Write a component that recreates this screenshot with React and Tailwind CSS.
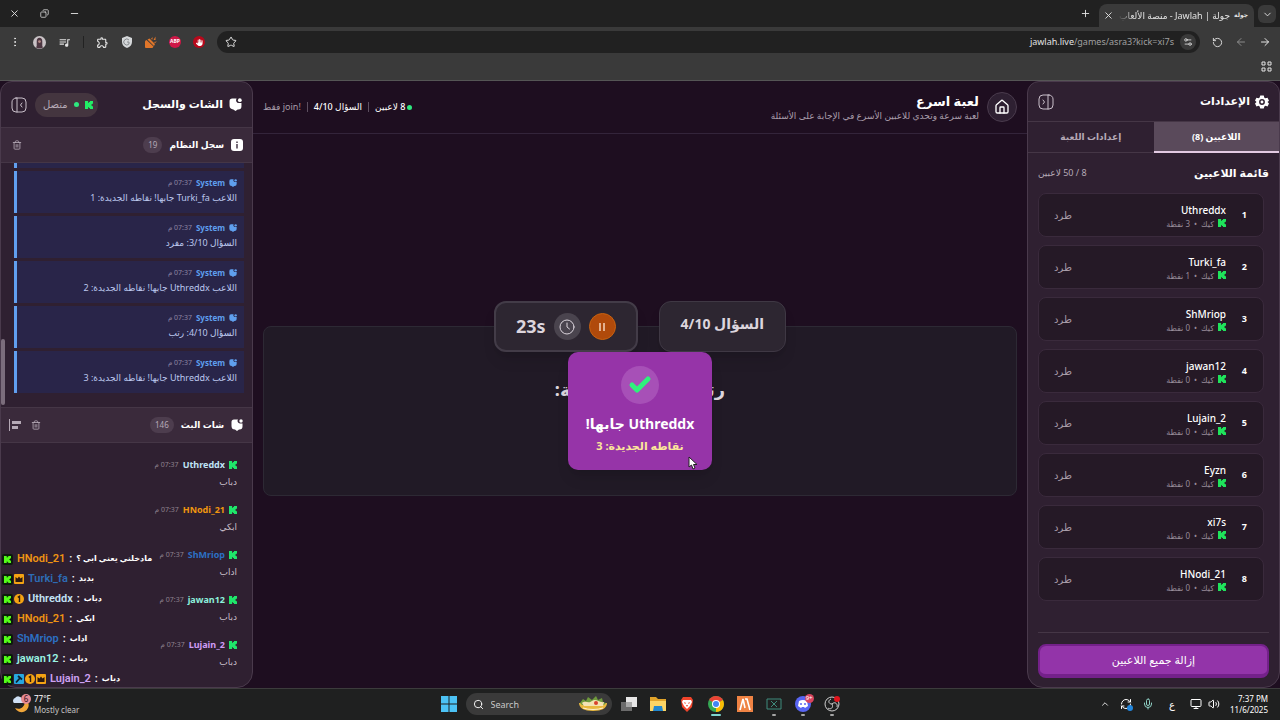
import {
  ArrowLeft,
  ArrowRight,
  Check,
  ChevronDown,
  ChevronUp,
  Copy,
  House,
  Mic,
  Minus,
  Monitor,
  MoreVertical,
  Plus,
  RefreshCw,
  RotateCcw,
  Search,
  Settings2,
  Star,
  Trash2,
  Volume2,
  X,
} from "lucide-react";
import { MdOutlineExtension, MdQueueMusic } from "react-icons/md";
import { FaHand } from "react-icons/fa6";

const players = [
  { name: "Uthreddx", points: 3 },
  { name: "Turki_fa", points: 1 },
  { name: "ShMriop", points: 0 },
  { name: "jawan12", points: 0 },
  { name: "Lujain_2", points: 0 },
  { name: "Eyzn", points: 0 },
  { name: "xi7s", points: 0 },
  { name: "HNodi_21", points: 0 },
];

const logs = [
  "اللاعب Turki_fa جابها! نقاطه الجديدة: 1",
  "السؤال 3/10: مفرد",
  "اللاعب Uthreddx جابها! نقاطه الجديدة: 2",
  "السؤال 4/10: رتب",
  "اللاعب Uthreddx جابها! نقاطه الجديدة: 3",
];

const messages = [
  { name: "Uthreddx", text: "دباب", color: "text-[#bfe3f5]" },
  { name: "HNodi_21", text: "ابكي", color: "text-[#f0960f]" },
  { name: "ShMriop", text: "اداب", color: "text-[#2c70c4]" },
  { name: "jawan12", text: "دباب", color: "text-[#8df0dc]" },
  { name: "Lujain_2", text: "دباب", color: "text-[#cf9cf5]" },
];

const overlayLines = [
  { name: "HNodi_21", text: "مادخلني يعني ابي ؟", color: "text-[#ee9313]", badges: [] },
  { name: "Turki_fa", text: "بدبد", color: "text-[#2d6cb5]", badges: ["crown"] },
  { name: "Uthreddx", text: "دباب", color: "text-[#c3e4f7]", badges: ["first"] },
  { name: "HNodi_21", text: "ابكي", color: "text-[#ee9313]", badges: [] },
  { name: "ShMriop", text: "اداب", color: "text-[#2c70c4]", badges: [] },
  { name: "jawan12", text: "دباب", color: "text-[#9af3e3]", badges: [] },
  { name: "Lujain_2", text: "دباب", color: "text-[#cda0f3]", badges: ["mod", "first", "crown"] },
];

function KickIcon({ className }) {
  return (
    <svg viewBox="0 0 9 9" className={className} fill="currentColor">
      <path d="M0 0h3.500v2h1V1h1V0H9v3H8v1H7v1h1v1h1v3H5.500V8h-1V7h-1v2H0z" />
    </svg>
  );
}

function ChatIcon({ className }) {
  return (
    <svg viewBox="0 0 24 24" className={className} fill="currentColor">
      <path d="M6 1h8a5 5 0 0 0 4 8h5v6a6 6 0 0 1-6 6h-1l-4 3-4-3a7 7 0 0 1-7-7V6a5 5 0 0 1 5-5z" />
      <circle cx="20" cy="4" r="3.500" />
    </svg>
  );
}

function GearIcon({ className }) {
  return (
    <svg viewBox="0 0 24 24" className={className} fill="currentColor" fillRule="evenodd">
      <path d="M9 1h6l1 3.500 2 1.200 3.500-1 2.500 5-2.600 2.300 2.600 2.500-2.500 5-3.500-1-2 1.200L15 23H9l-1-3.300-2-1.200-3.500 1-2.500-5L2.600 12 0 9.500l2.500-5 3.500 1L8 4.400zM12 7a5 5 0 1 0 0 10 5 5 0 0 0 0-10zm0 2.500a2.500 2.500 0 1 1 0 5 2.500 2.500 0 0 1 0-5z" />
    </svg>
  );
}

function PanelIcon({ flip }) {
  return (
    <svg
      viewBox="0 0 16 16"
      className={flip ? "size-4 -scale-x-100" : "size-4"}
      fill="none"
      stroke="currentColor"
      strokeLinecap="round"
      strokeLinejoin="round"
    >
      <rect x="1" y="1" width="14" height="14" rx="4" />
      <path d="M6 1v14M11 6 9.500 8l1.500 2" />
    </svg>
  );
}

function Badge({ type }) {
  if (type === "first") {
    return (
      <svg viewBox="0 0 10 10" className="size-[10px]">
        <circle cx="5" cy="5" r="5" fill="#f5a313" />
        <path d="M3.800 3.300 5.500 2.200V8" fill="none" stroke="#2c1a10" strokeWidth="1.400" />
      </svg>
    );
  }
  if (type === "mod") {
    return (
      <svg viewBox="0 0 10 10" className="size-[10px]">
        <rect width="10" height="10" rx="1" fill="#27a7e0" />
        <path d="M2 8.500 6 4M4 2l4 3.500" stroke="#10202c" strokeWidth="1.800" />
      </svg>
    );
  }
  return (
    <svg viewBox="0 0 10 10" className="size-[10px]">
      <rect width="10" height="10" rx="1" fill="#f5a313" />
      <path d="M1.500 3 3.500 4.500 5 2.500l1.500 2L8.500 3v5h-7z" fill="#2c1a10" />
    </svg>
  );
}

function BrowserBar() {
  return (
    <header dir="rtl" className="shrink-0 bg-[#3a3a3a] text-[#e3e3e3]">
      {/* Tabs */}
      <div className="flex h-[27px] items-end bg-[#212121] pr-1">
        <button aria-label="Search tabs" className="mb-1 flex size-[18px] items-center justify-center rounded-md bg-[#3a3a3a]">
          <ChevronDown className="size-[11px]" />
        </button>
        <div className="mr-1 flex h-[23px] w-[155px] items-center gap-1 rounded-t-lg bg-[#3a3a3a] pl-1 pr-[6px]">
          <span className="text-[6px] font-bold">جولة</span>
          <span className="min-w-0 flex-1 overflow-hidden whitespace-nowrap text-[9px] [mask-image:linear-gradient(to_right,transparent,black_16px)]">
            جولة | Jawlah - منصة الألعاب الت
          </span>
          <button aria-label="Close tab">
            <X className="size-[11px]" />
          </button>
        </div>
        <button aria-label="New tab" className="mb-2 mr-2">
          <Plus className="size-[11px]" />
        </button>
        <div className="mb-2 mr-auto flex items-center gap-5 pl-[9px]">
          <button aria-label="Minimize">
            <Minus className="size-[11px]" />
          </button>
          <button aria-label="Restore">
            <Copy className="size-[9px] -scale-x-100" />
          </button>
          <button aria-label="Close">
            <X className="size-[11px]" />
          </button>
        </div>
      </div>

      {/* Toolbar */}
      <div className="flex h-[30px] items-center gap-3 px-[9px]">
        <button aria-label="Back">
          <ArrowRight className="size-3" />
        </button>
        <button aria-label="Forward" className="text-[#8a8a8a]">
          <ArrowLeft className="size-3" />
        </button>
        <button aria-label="Reload">
          <RotateCcw className="size-[11px]" />
        </button>
        <div className="flex h-[22px] flex-1 items-center gap-[6px] rounded-full bg-[#212121] pl-2 pr-1">
          <button aria-label="Site settings" className="flex size-4 items-center justify-center rounded-full bg-[#3a3a3a]">
            <Settings2 className="size-[10px]" />
          </button>
          <span dir="ltr" className="flex-1 text-right text-[9px]">
            jawlah.live<span className="text-[#a0a0a0]">/games/asra3?kick=xi7s</span>
          </span>
          <button aria-label="Bookmark">
            <Star className="size-3" />
          </button>
        </div>
        <span className="flex size-3 items-center justify-center rounded-full bg-[#b9081b]">
          <FaHand className="size-[7px] text-white" />
        </span>
        <span className="flex size-3 items-center justify-center rounded-full bg-[#cf1747] text-[5px] font-bold text-white">
          ABP
        </span>
        <svg viewBox="0 0 12 12" className="size-3" fill="#e0762a">
          <path d="M1.500 4a5 5 0 1 0 7 6.500z" />
          <path d="M2.500 3.500 9 10l1-2-5.500-5.500zM6 3l1.500-2v2.500zM8.500 4 10.500.5V4zM9 6l3-.5-2 1.500z" />
        </svg>
        <svg viewBox="0 0 12 12" className="size-3">
          <path d="M6 0 11 2v4c0 3-2 5-5 6C3 11 1 9 1 6V2z" fill="#d5d8da" />
          <path d="M8 4a3 3 0 1 0 0 4V6H6" fill="none" stroke="#85898c" />
        </svg>
        <MdOutlineExtension className="size-[13px]" />
        <span className="h-3 w-px bg-[#222]" />
        <MdQueueMusic className="size-[13px]" />
        <svg viewBox="0 0 14 14" className="size-[13px]">
          <circle cx="7" cy="7" r="7" fill="#c9c3c6" />
          <path d="M4 6a3 4 0 0 1 6 0v5l1 1a7 7 0 0 1-8 0l1-1z" fill="#4d3742" />
          <circle cx="7" cy="6" r="1.500" fill="#b48a86" />
        </svg>
        <button aria-label="Menu">
          <MoreVertical className="size-3" />
        </button>
      </div>

      {/* Bookmarks */}
      <div className="flex h-[24px] items-start border-b border-[#555] px-2 pt-1">
        <svg viewBox="0 0 11 11" className="size-[11px]" fill="none" stroke="currentColor">
          <path d="M1 1h3v3H1zM7 1h3v3H7zM1 7h3v3H1zM7 7h3v3H7z" />
        </svg>
      </div>
    </header>
  );
}

function SettingsPanel() {
  return (
    <aside className="flex w-[253px] shrink-0 flex-col overflow-hidden rounded-2xl rounded-t-xl border border-[#4a3a4c] bg-[#2f2031]">
      <div className="flex h-10 shrink-0 items-center gap-[5px] border-b border-[#453646] px-[10px]">
        <GearIcon className="size-[14px]" />
        <h2 className="text-[11px] font-bold">الإعدادات</h2>
        <button aria-label="طي الإعدادات" className="mr-auto text-[#c9bfca]">
          <PanelIcon flip />
        </button>
      </div>

      <div className="grid h-[31px] shrink-0 grid-cols-2 text-[9px] font-bold">
        <button className="border-b-2 border-[#e2c9e2] bg-[#5a4a5b]">اللاعبين (8)</button>
        <button className="border-b border-[#453646] text-[#b5a9b6]">إعدادات اللعبة</button>
      </div>

      <div className="flex min-h-0 flex-1 flex-col px-[10px] pb-[9px]">
        <div className="flex h-10 shrink-0 items-center justify-between">
          <h3 className="text-[11px] font-bold">قائمة اللاعبين</h3>
          <span className="text-[9px] text-[#b5a9b6]">8 / 50 لاعبين</span>
        </div>

        <ol className="flex min-h-0 flex-1 flex-col gap-2 overflow-hidden pr-[5px]">
          {players.map((player, i) => (
            <li
              key={player.name}
              className="flex h-11 shrink-0 items-center rounded-lg border border-[#3a2a3c] bg-[#251926] pl-[15px] pr-4"
            >
              <span className="w-[6px] text-[9px] font-bold">{i + 1}</span>
              <div className="mr-[15px]">
                <p className="text-[10px]/[16px] font-medium">{player.name}</p>
                <p className="flex items-center gap-1 text-[8px]/[11px] text-[#988b99]">
                  <KickIcon className="size-2 text-[#1fe35b]" />
                  <span>كيك</span>
                  <span>•</span>
                  <span>{player.points} نقطة</span>
                </p>
              </div>
              <button className="mr-auto text-[10px] text-[#a89ca9]">طرد</button>
            </li>
          ))}
        </ol>

        <div className="mt-3 shrink-0 border-t border-[#453646] pt-[11px]">
          <button className="h-[34px] w-full rounded-lg border-2 border-b-4 border-[#74218a] bg-[#9334a9] text-[11px] font-medium">
            إزالة جميع اللاعبين
          </button>
        </div>
      </div>
    </aside>
  );
}

function GameArea() {
  return (
    <main className="flex min-w-0 flex-1 flex-col">
      <div className="flex h-[53px] shrink-0 items-center gap-2 border-b border-[#33243a] px-[10px]">
        <a href="#home" aria-label="الرئيسية" className="flex size-[30px] items-center justify-center rounded-full border border-[#4a3b4d] bg-[#2e2032]">
          <House className="size-4" />
        </a>
        <div>
          <h1 className="text-[13px]/[16px] font-bold">لعبة اسرع</h1>
          <p className="text-[9px]/[13px] text-[#a99dab]">لعبة سرعة وتحدي للاعبين الأسرع في الإجابة على الأسئلة</p>
        </div>
        <div className="mr-auto flex items-center gap-[6px] text-[9px]">
          <span className="size-[5px] rounded-full bg-[#2ee87f]" />
          <span className="-mr-1 font-medium">8 لاعبين</span>
          <span className="h-[10px] w-px bg-[#5d4f60]" />
          <span className="font-medium">السؤال 4/10</span>
          <span className="h-[10px] w-px bg-[#5d4f60]" />
          <span className="text-[#a99dab]">
            <bdi>join!</bdi> فقط
          </span>
        </div>
      </div>

      <div className="flex min-h-0 flex-1 items-center px-[10px]">
        <section className="relative flex h-[170px] w-full flex-col items-center rounded-lg border border-[#2d2934] bg-[#211a26] text-[#dcd5dd]">
          <div className="-mt-[26px] flex gap-[21px]">
            <div className="flex h-[51px] items-center rounded-xl border border-[#3f3844] bg-[#2d2631] px-[21px] pb-[6px] text-[14px] font-bold shadow-lg">
              السؤال 4/10
            </div>
            <div className="flex h-[51px] items-center gap-2 rounded-xl border-2 border-[#433c48] bg-[#2d2631] px-5 shadow-lg">
              <button aria-label="إيقاف مؤقت" className="flex size-[27px] items-center justify-center rounded-full border border-[#c9620f] bg-[#b04a0b]">
                <svg viewBox="0 0 8 8" className="size-2" fill="none" stroke="#f4d5bd" strokeWidth="1.500">
                  <path d="M2 0v8M6 0v8" />
                </svg>
              </button>
              <span className="flex size-[27px] items-center justify-center rounded-full bg-[#4a444e]">
                <svg viewBox="0 0 16 16" className="size-4" fill="none" stroke="currentColor" strokeLinecap="round">
                  <circle cx="8" cy="8" r="7" />
                  <path d="M8 4v4l2.500 2" />
                </svg>
              </span>
              <span className="text-[18px] font-bold">23s</span>
            </div>
          </div>
          <p className="mt-6 text-[18px] font-bold">رتب الكلمات التالية:</p>

          {/* Result */}
          <div className="absolute inset-0 flex items-center justify-center">
            <div className="flex h-[118px] shrink-0 flex-col items-center rounded-[10px] bg-[#9634a8] px-[18px] pt-[14px] text-white shadow-lg">
              <span className="flex size-[38px] items-center justify-center rounded-full bg-[#a750b7]">
                <Check className="size-6 text-[#2ff17c]" strokeWidth={5} />
              </span>
              <p className="mt-2 text-[14px]/[24px] font-bold">Uthreddx جابها!</p>
              <p className="text-[11px]/[20px] font-bold text-[#fbe69a]">نقاطه الجديدة: 3</p>
            </div>
            <svg viewBox="0 0 10 14" className="absolute left-1/2 top-[129px] ml-[48px] h-[14px] w-[10px]">
              <path d="M1 1v10l2.500-2 1.500 4 2-1-1.500-3.500H9z" fill="#fff" stroke="#222" />
            </svg>
          </div>
        </section>
      </div>
    </main>
  );
}

function SectionHeader({ icon, title, count, children }) {
  return (
    <div className="flex h-9 shrink-0 items-center gap-[7px] border-y border-[#453646] bg-[#3a2a3b] pl-2 pr-[9px]">
      {icon}
      <h3 className="text-[9px] font-bold">{title}</h3>
      <span className="rounded-full bg-[#4d3d4e] px-[5px] text-[8px]/[16px] text-[#b5a9b6]">{count}</span>
      <div className="mr-auto flex items-center gap-[10px] text-[#b5a9b6]">{children}</div>
    </div>
  );
}

function ChatPanel() {
  return (
    <aside className="flex w-[253px] shrink-0 flex-col overflow-hidden rounded-2xl rounded-t-xl border border-[#4a3a4c] bg-[#2f2031]">
      <div className="flex h-[45px] shrink-0 items-center px-[10px]">
        <ChatIcon className="size-[13px]" />
        <h2 className="mr-[6px] text-[11px] font-bold">الشات والسجل</h2>
        <div className="mr-auto flex h-6 items-center gap-[5px] rounded-full bg-[#44353f] pl-2 pr-[5px] text-[10px] text-[#b5a9b6]">
          <KickIcon className="size-2 text-[#22ee66]" />
          <span className="mx-px size-[5px] rounded-full bg-[#2ee87f]" />
          <span>متصل</span>
        </div>
        <button aria-label="طي الشات" className="mr-2 text-[#c9bfca]">
          <PanelIcon />
        </button>
      </div>

      {/* System log */}
      <section className="flex min-h-0 flex-1 flex-col">
        <SectionHeader
          title="سجل النظام"
          count={19}
          icon={
            <svg viewBox="0 0 12 12" className="size-3">
              <rect width="12" height="12" rx="3" fill="#fff" />
              <path d="M6 5v4.500M6 2.500V4" stroke="#3a2a3b" strokeWidth="1.400" />
            </svg>
          }
        >
          <button aria-label="مسح السجل" className="pl-[3px]">
            <Trash2 className="size-[10px]" />
          </button>
        </SectionHeader>
        <div className="relative flex min-h-0 flex-1 flex-col gap-[3px] overflow-hidden pb-[14px] pl-[13px] pr-2">
          {/* Tail of the older entries */}
          <div className="min-h-0 flex-1 border-l-3 border-[#619fef] bg-[#292549]" />
          {logs.map((log) => (
            <div key={log} className="h-[42px] shrink-0 border-l-3 border-[#619fef] bg-[#292549] px-[7px] pt-[5px]">
              <p className="flex items-center gap-1 text-[8px]/[13px]">
                <ChatIcon className="size-2 text-[#5f9fee]" />
                <span className="font-bold text-[#5f9fee]">System</span>
                <span className="text-[7px] text-[#8f86a3]">07:37 م</span>
              </p>
              <p className="text-[9px]/[17px] text-[#bcc8ee]">{log}</p>
            </div>
          ))}
          <span className="absolute bottom-[2px] left-0 h-[66px] w-1 rounded-full bg-[#7b6d7c]" />
        </div>
      </section>

      {/* Live chat */}
      <section className="flex min-h-0 flex-1 flex-col">
        <SectionHeader title="شات البث" count={146} icon={<ChatIcon className="size-3" />}>
          <button aria-label="مسح الشات">
            <Trash2 className="size-[10px]" />
          </button>
          <button aria-label="محاذاة">
            <svg viewBox="0 0 12 12" className="size-3" fill="currentColor">
              <path d="M0 0h1v12H0zM3 2h9v3H3zM3 7h6v3H3z" />
            </svg>
          </button>
        </SectionHeader>
        <div className="flex min-h-0 flex-1 flex-col justify-end gap-[11px] overflow-hidden px-[15px] pb-[17px]">
          {messages.map((message) => (
            <div key={message.name} className="shrink-0">
              <p className="flex items-center gap-1 text-[9px]/[17px]">
                <KickIcon className="size-2 text-[#1fe56a]" />
                <span className={`font-bold ${message.color}`}>{message.name}</span>
                <span className="text-[7px] text-[#8f838f]">07:37 م</span>
              </p>
              <p className="text-[9px]/[17px] text-[#c9bfca]">{message.text}</p>
            </div>
          ))}
        </div>
      </section>
    </aside>
  );
}

function StreamOverlay() {
  return (
    <ul dir="ltr" className="absolute -bottom-px left-0 font-['Roboto','DejaVu_Sans',sans-serif] text-[11px]/[20px] font-semibold">
      {overlayLines.map((line, i) => (
        <li key={i} className="flex items-center gap-px pl-[2px]">
          <span className="flex size-[11px] items-center justify-center rounded-xs bg-[#0d1a0c]">
            <KickIcon className="size-[7px] text-[#53fc18]" />
          </span>
          {line.badges.map((badge) => (
            <Badge key={badge} type={badge} />
          ))}
          <span className={`ml-[3px] ${line.color}`}>{line.name}</span>
          <span className="mx-[3px]">:</span>
          <bdi className="text-[8px] font-bold text-white">{line.text}</bdi>
        </li>
      ))}
    </ul>
  );
}

function TaskIcon({ label, running, active, badge, children }) {
  return (
    <button aria-label={label} className="relative">
      <svg viewBox="0 0 16 16" className="size-4">
        {children}
      </svg>
      {running && <span className="absolute -bottom-1 left-[6px] h-[2px] w-1 rounded-full bg-[#a5a5a5]" />}
      {active && <span className="absolute -bottom-1 left-[3px] h-[2px] w-[10px] rounded-full bg-[#7fd6d0]" />}
      {badge && (
        <span className="absolute -right-[3px] -top-[2px] rounded-full bg-[#d8445f] px-px text-[6px]/[9px] text-white">
          {badge}
        </span>
      )}
    </button>
  );
}

function Taskbar() {
  return (
    <footer className="grid h-8 shrink-0 grid-cols-[1fr_auto_1fr] items-center border-t border-[#3c3c3c] bg-[#1f2020] px-3 pb-px text-[8px]/[11px]">
      <div className="flex items-center gap-[2px]">
        <svg viewBox="0 0 20 20" className="size-5">
          <path d="M16 8a7 7 0 1 1-13 6c5 2 9 0 10-6z" fill="#f0a63a" />
          <path d="M2 9a3 3 0 0 1 1-5 4 4 0 0 1 7 1 2 2 0 0 1 1 4z" fill="#cfe0f5" />
          <circle cx="14" cy="5" r="5" fill="#e58b94" />
          <text x="14" y="8" textAnchor="middle" fontSize="8" fill="#3a1018">6</text>
        </svg>
        <div>
          <p>77°F</p>
          <p className="text-[#c4c4c4]">Mostly clear</p>
        </div>
      </div>

      <div className="flex items-center gap-[13px]">
        <TaskIcon label="Start">
          <path d="M0 0h7.500v7.500H0zM8.500 0H16v7.500H8.500zM0 8.500h7.500V16H0zM8.500 8.500H16V16H8.500z" fill="#4cc2f5" />
        </TaskIcon>
        <label className="-mx-1 flex h-[22px] w-[146px] items-center gap-[7px] rounded-full bg-[#3a3a3a] pl-[7px] pr-1">
          <Search className="size-[11px]" />
          <input placeholder="Search" aria-label="Search" className="w-0 flex-1 text-[9px] placeholder:text-[#c8c8c8]" />
          <svg viewBox="0 0 30 16" className="h-4 w-[30px]">
            <path d="M1 7h28c0 5-5 8-14 8S1 12 1 7z" fill="#e8b83f" />
            <path d="M2 7 5 3l3 2 2-4 4 3 4-4 2 4 4-2 1 4 3 1-2 2H4z" fill="#6f9a3c" />
            <path d="M4 7c4-3 6 1 10-2s7 2 12 1l-1 4H6z" fill="#f3e2b3" />
            <circle cx="18" cy="7" r="2" fill="#d8402c" />
            <path d="M5 12c6 2 14 2 20 0" stroke="#fff1cf" fill="none" />
          </svg>
        </label>
        <TaskIcon label="Task view">
          <path d="M0 6h11v9H0z" fill="#6b6b6b" />
          <path d="M5 1h11v10H5z" fill="#e6e6e6" />
          <path d="M5 6h6v5H5z" fill="#a7a7a7" />
        </TaskIcon>
        <TaskIcon label="File Explorer">
          <path d="M0 1h6l2 2h8v12H0z" fill="#e0a32a" />
          <path d="M0 5h16v10H0z" fill="#fbd465" />
          <path d="M4 10h8l1 5H3z" fill="#2187ce" />
        </TaskIcon>
        <TaskIcon label="Brave">
          <path d="M4 1h8l2 3-1 7-5 5-5-5-1-7z" fill="#f0442b" />
          <path d="M4 4h8l1 2-2 4-3 3-3-3-2-4z" fill="#fff" />
          <path d="M5 6l2 1-1 1zM11 6 9 7l1 1zM7 9h2l-1 2z" fill="#f0442b" />
        </TaskIcon>
        <TaskIcon label="Chrome" active>
          <circle cx="8" cy="8" r="8" fill="#34a853" />
          <path d="M8 8 1.100 4A8 8 0 0 1 14.900 4z" fill="#ea4335" />
          <path d="M8 8 14.900 4A8 8 0 0 1 8 16z" fill="#fbbc05" />
          <circle cx="8" cy="8" r="4" fill="#fff" />
          <circle cx="8" cy="8" r="3" fill="#4285f4" />
        </TaskIcon>
        <TaskIcon label="Armoury">
          <path d="M0 0h16v16H0z" fill="#ef8344" />
          <path d="M3 14 6 3l2 9M8 3h2l3 11" fill="none" stroke="#fff" strokeWidth="1.600" />
        </TaskIcon>
        <TaskIcon label="Capture" running>
          <path d="M1 3h14v10H1zM5 5l6 6M11 5l-6 6" fill="none" stroke="#3f8b7c" />
        </TaskIcon>
        <TaskIcon label="Discord" running badge="9+">
          <circle cx="8" cy="8" r="8" fill="#5865f2" />
          <path d="M4 5q4-2 8 0l1 5-3 2-1-1H7l-1 1-3-2z" fill="#fff" />
          <circle cx="6" cy="8" r="1" fill="#5865f2" />
          <circle cx="10" cy="8" r="1" fill="#5865f2" />
        </TaskIcon>
        <TaskIcon label="OBS" running>
          <g fill="none" stroke="#cfcfcf">
            <circle cx="8" cy="8" r="7" />
            <path d="M8 8c-4 0-4-4-1-5M8 8c2 4-2 6-4 4M8 8c3-3 6 0 5 3" />
          </g>
          <circle cx="13" cy="3" r="3" fill="#e0131c" />
        </TaskIcon>
      </div>

      <div className="flex items-center justify-end gap-[10px]">
        <ChevronUp className="size-[10px]" />
        <span className="relative">
          <RefreshCw className="size-3" />
          <span className="absolute -bottom-px -right-px size-[6px] rounded-full bg-[#2387dd]" />
        </span>
        <Mic className="size-3 text-[#8fd0c4]" />
        <span className="mx-[5px] text-[10px]">ع</span>
        <Monitor className="size-3" />
        <Volume2 className="-ml-1 size-3" />
        <div className="text-right">
          <p>7:37 PM</p>
          <p>11/6/2025</p>
        </div>
      </div>
    </footer>
  );
}

export default function App() {
  return (
    <div className="flex h-screen flex-col overflow-hidden bg-[#1e0e20] font-['Noto_Sans','DejaVu_Sans',sans-serif] text-white">
      <BrowserBar />
      <div dir="rtl" className="relative flex min-h-0 flex-1">
        <SettingsPanel />
        <GameArea />
        <ChatPanel />
        <StreamOverlay />
      </div>
      <Taskbar />
    </div>
  );
}
